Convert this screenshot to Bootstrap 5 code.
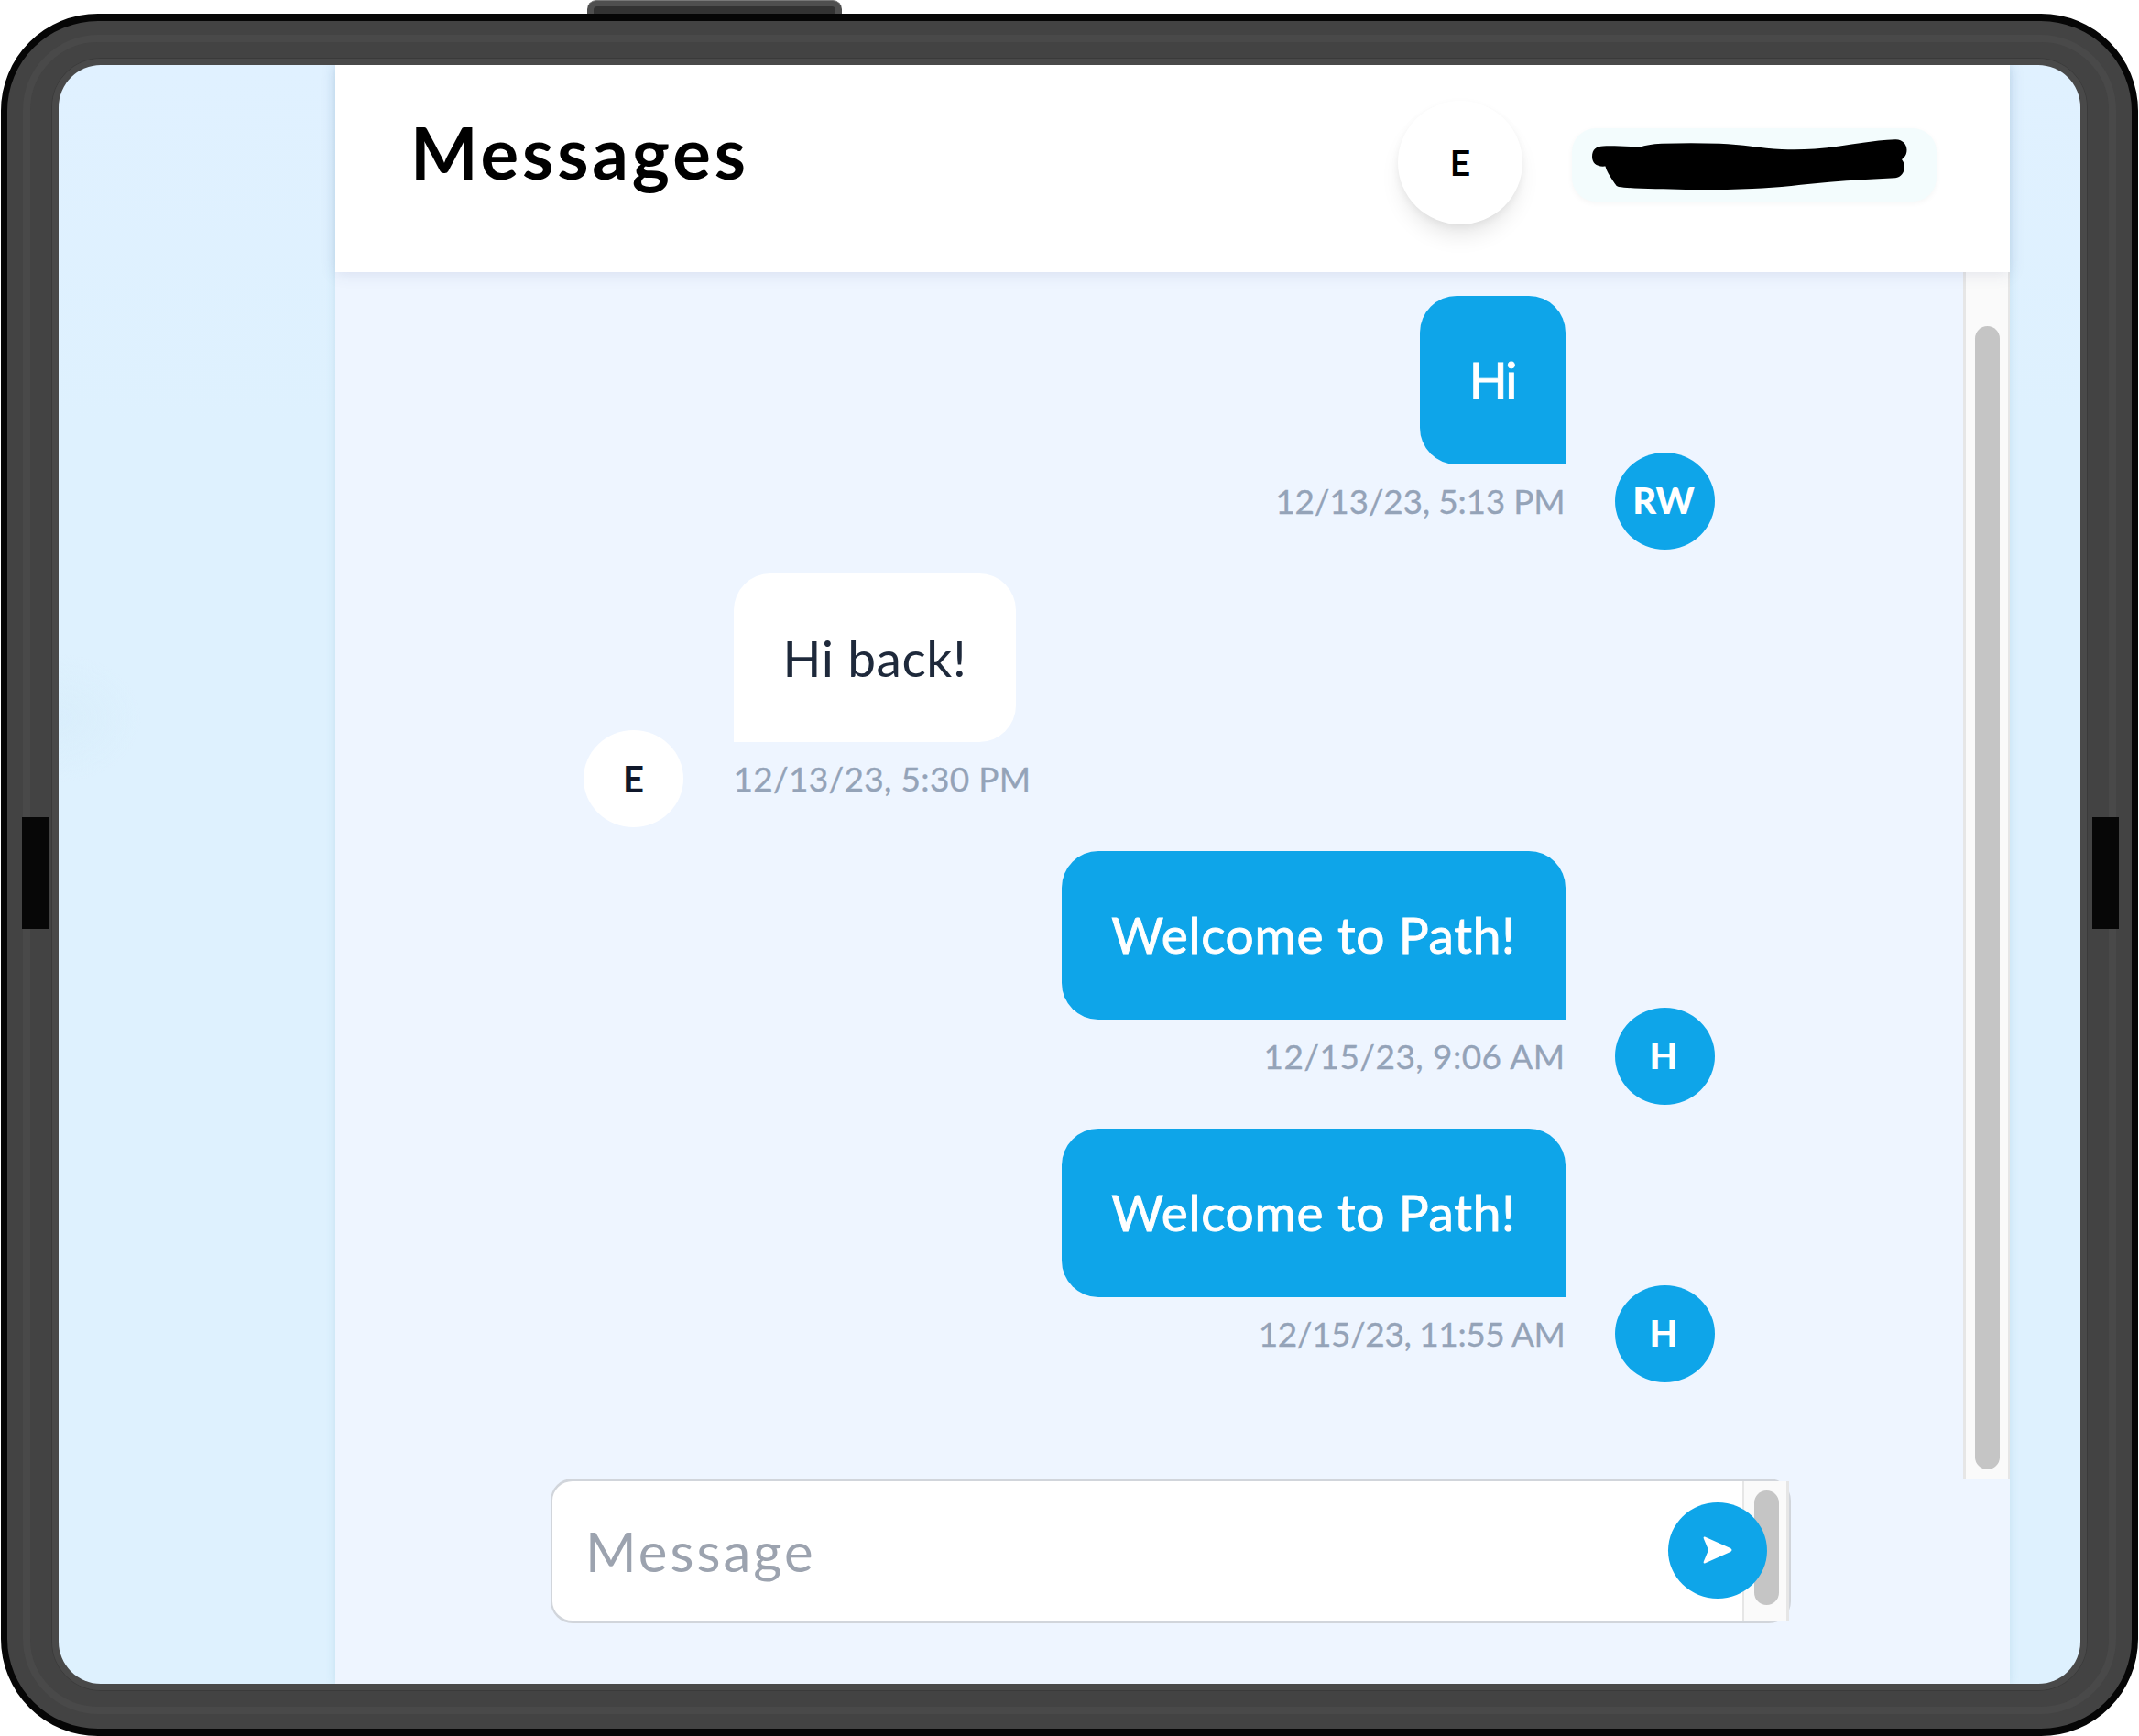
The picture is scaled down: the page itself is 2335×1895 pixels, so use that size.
<!DOCTYPE html>
<html lang="en">
<head>
<meta charset="utf-8">
<title>Messages</title>
<link href="https://cdn.jsdelivr.net/npm/bootstrap@5.3.0/dist/css/bootstrap.min.css" rel="stylesheet">
<style>
body{width:2335px;height:1895px;overflow:hidden;background:#fff;font-family:Lato,"Open Sans",sans-serif}
.power-key{width:278px;height:15px;margin-left:641px;padding:6px 7px 0;background:#4f4f4f;border-top:1px solid #777;border-radius:10px 10px 0 0}
.power-key span{background:#333;border-radius:4px 4px 0 0}
.device{width:2333px;height:1880px;margin-left:1px;border:solid #060606;border-width:8px 7px;border-radius:106px;background:#434343;padding:14.5px 17px 16px}
.rim-a{border:8px solid #494949;border-radius:82px;padding:17px 23px}
.rim-b{border:1px solid #3a3a3a;border-radius:54px}
.rim-c{border:7px solid #494949;border-radius:53px}
.screen{background:radial-gradient(ellipse 90px 70px at 0 713px,rgba(214,236,250,.6),transparent),linear-gradient(#e0f1ff,#def1fe 400px);border-radius:46px;overflow:hidden;padding-left:302px}
.slot{position:absolute;top:892px;width:29px;height:122px;background:#070707}
.slot-l{left:24px}.slot-r{left:2283.5px}
.panel{width:1828px;background:#eef5ff;box-shadow:0 0 10px rgba(70,150,170,.18)}
.topbar{height:226px;background:#fff;padding:0 80px 0 82px;box-shadow:0 2px 16px rgba(60,80,130,.13);z-index:1}
.title{font-size:78px;line-height:190px;font-weight:700;letter-spacing:3.9px;color:#000}
.contact{width:136px;height:135px;margin:39px 54px 0 0;background:#fff;box-shadow:0 16px 24px -5px rgba(0,0,0,.1),0 3px 8px rgba(0,0,0,.05);font-size:39px;font-weight:700;color:#000}
.pill{width:398px;height:80px;margin-top:69px;border-radius:26px;background:#f3fcfd;box-shadow:0 2px 6px rgba(0,0,0,.04)}
.chat{height:1317px}
.thread{padding:26.5px 271px 0;gap:26.6px}
.msg{gap:54.5px}
.bubble{height:183.5px;padding:0 54px;font-size:55px;letter-spacing:.6px;border-radius:40px;white-space:nowrap}
.mine .bubble{background:#0ea5e9;color:#fff;border-bottom-right-radius:0;letter-spacing:.68px;-webkit-text-stroke:.9px #fff;padding-bottom:2px}
.theirs .bubble{background:#fff;color:#1e293b;border-bottom-left-radius:0;letter-spacing:.6px}
.mine .bubble.tight{letter-spacing:-2px}
.stamp{height:80px;line-height:79px;margin-bottom:13px;font-size:37px;color:#94a3b8;white-space:nowrap;-webkit-text-stroke:.3px #94a3b8}
.s1{letter-spacing:-.2px}.s2{letter-spacing:.3px}.s3{letter-spacing:.45px}.s4{letter-spacing:-.45px}
.who{width:109px;height:106px;font-size:40px;font-weight:900}
.mine .who{background:#0ea5e9;color:#fff;padding:0 3px 1px 0}
.theirs .who{background:#fff;color:#0f172a;font-weight:700}
.track{width:51px;background:#fafafa;border:solid #e6e6e6;border-width:0 2px 0 3px}
.thumb{width:27px;border-radius:14px;background:#c5c5c5;margin-left:1px}
.chat .thumb{margin-top:59px;height:1248px}
.composer{height:224px;padding-left:235px}
.field{width:1354px;height:158px;border:3px solid #d1d5db;border-left-width:2px;border-right-width:2px;border-radius:24px;background:#fff}
.field input{font-size:60px;letter-spacing:3px;padding:0 0 0 36px;border-radius:22px}
.field input::placeholder{color:#9ca3af}
.field .track{border-width:0 3px 0 2px}
.field .thumb{height:125px;margin-top:10px;margin-left:3px}
.send{position:absolute;right:24px;top:23px;width:108px;height:105px;background:#0ea5e9;border:0}
</style>
</head>
<body>
<div class="power-key d-flex"><span class="flex-fill"></span></div>
<div class="device d-flex">
 <div class="rim-a d-flex flex-fill"><div class="rim-b d-flex flex-fill"><div class="rim-c d-flex flex-fill">
  <div class="screen flex-fill">
   <main class="panel d-flex flex-column h-100">
    <header class="topbar d-flex align-items-start position-relative">
     <h1 class="title m-0 me-auto">Messages</h1>
     <div class="contact rounded-circle d-flex align-items-center justify-content-center">E</div>
     <div class="pill">
      <svg class="d-block" width="398" height="80" viewBox="1716 139 398 80"><path d="M1738 170C1738 162 1743 158.500 1750 158.500C1762 158 1776 159 1790 159.500C1796 158 1803 156 1814 155.700C1836 155 1856 155 1877 155.700C1902 156.500 1922 161 1945 162Q1963 162.800 1981 161.500C2013 159 2042 152 2069 151.300C2077 151 2081.500 157 2081.500 162.500C2081.500 168 2079 171 2076 173C2078 176 2079 178 2079 181.500C2079 187 2075 192.500 2069 193.300C2045 195 2021 195.500 1997 197.700C1969 200 1942 204 1913 204.900C1889 206 1864 206.300 1840 206C1814 205.500 1780 205 1767 203Q1764 202 1762.500 199C1757 191 1753.500 185 1752.500 180.500C1743 181.500 1738 177 1738 170Z"/></svg>
     </div>
    </header>
    <section class="chat d-flex">
     <div class="thread d-flex flex-column flex-fill">
      <div class="msg mine d-flex align-items-end justify-content-end">
       <div class="d-flex flex-column align-items-end"><div class="bubble tight d-flex align-items-center">Hi</div><div class="stamp s1">12/13/23, 5:13 PM</div></div>
       <div class="who rounded-circle d-flex align-items-center justify-content-center">RW</div>
      </div>
      <div class="msg theirs d-flex align-items-end">
       <div class="who rounded-circle d-flex align-items-center justify-content-center">E</div>
       <div class="d-flex flex-column align-items-start"><div class="bubble d-flex align-items-center">Hi back!</div><div class="stamp s2">12/13/23, 5:30 PM</div></div>
      </div>
      <div class="msg mine d-flex align-items-end justify-content-end">
       <div class="d-flex flex-column align-items-end"><div class="bubble d-flex align-items-center">Welcome to Path!</div><div class="stamp s3">12/15/23, 9:06 AM</div></div>
       <div class="who rounded-circle d-flex align-items-center justify-content-center">H</div>
      </div>
      <div class="msg mine d-flex align-items-end justify-content-end">
       <div class="d-flex flex-column align-items-end"><div class="bubble d-flex align-items-center">Welcome to Path!</div><div class="stamp s4">12/15/23, 11:55 AM</div></div>
       <div class="who rounded-circle d-flex align-items-center justify-content-center">H</div>
      </div>
     </div>
     <div class="track d-flex justify-content-center"><div class="thumb"></div></div>
    </section>
    <form class="composer">
     <div class="field d-flex position-relative">
      <input class="form-control border-0 shadow-none bg-transparent flex-fill" type="text" placeholder="Message" aria-label="Message">
      <div class="track d-flex justify-content-center flex-shrink-0"><div class="thumb"></div></div>
      <button class="send rounded-circle d-flex align-items-center justify-content-center p-0" type="button" aria-label="Send">
       <svg width="34" height="32" viewBox="0 0 34 32"><path d="M3 1.500L31 14Q34 16 31 18L3 30.500Q1 31 1.800 28.500L7 16L1.800 3.500Q1 1 3 1.500Z" fill="#fff"/></svg>
      </button>
     </div>
    </form>
   </main>
  </div>
 </div></div></div>
</div>
<div class="slot slot-l"></div><div class="slot slot-r"></div>
<script src="https://cdn.jsdelivr.net/npm/bootstrap@5.3.0/dist/js/bootstrap.bundle.min.js"></script>
</body>
</html>
